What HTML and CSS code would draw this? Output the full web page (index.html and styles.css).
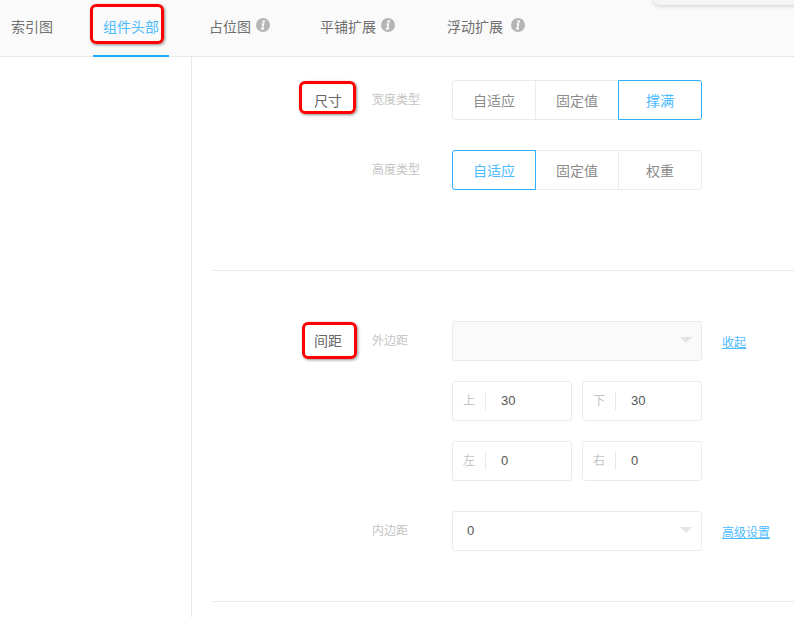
FILE: index.html
```html
<!DOCTYPE html>
<html lang="zh-CN">
<head>
<meta charset="utf-8">
<title>组件头部</title>
<link rel="stylesheet" href="styles.css">
</head>
<body>
<div class="popup"></div>
<nav class="tabs">
  <a class="tab tab-index">索引图</a>
  <a class="tab tab-header active">组件头部<span class="mark mark-tab"></span></a>
  <a class="tab tab-holder">占位图<svg class="info" viewBox="0 0 14 14"><circle cx="7" cy="7" r="7" fill="#b5b5b5"/><path d="M6.6 2.4h2.6l-.5 2H6.1zM5.8 5.3h2.6L7.3 10.1h.9l-.3 1.4H4.7l.3-1.4h.7l.7-3.4h-.9z" fill="#fff"/></svg></a>
  <a class="tab tab-tile">平铺扩展<svg class="info" viewBox="0 0 14 14"><circle cx="7" cy="7" r="7" fill="#b5b5b5"/><path d="M6.6 2.4h2.6l-.5 2H6.1zM5.8 5.3h2.6L7.3 10.1h.9l-.3 1.4H4.7l.3-1.4h.7l.7-3.4h-.9z" fill="#fff"/></svg></a>
  <a class="tab tab-float">浮动扩展<svg class="info info-wide" viewBox="0 0 14 14"><circle cx="7" cy="7" r="7" fill="#b5b5b5"/><path d="M6.6 2.4h2.6l-.5 2H6.1zM5.8 5.3h2.6L7.3 10.1h.9l-.3 1.4H4.7l.3-1.4h.7l.7-3.4h-.9z" fill="#fff"/></svg></a>
</nav>
<div class="layout">
  <aside class="sidebar"></aside>
  <main class="main">
    <section class="section section-size">
      <h2 class="title">尺寸<span class="mark mark-size"></span></h2>
      <div class="rows rows-size">
        <div class="row">
          <label class="label">宽度类型</label>
          <div class="segments">
            <button class="seg">自适应</button>
            <button class="seg">固定值</button>
            <button class="seg on">撑满</button>
          </div>
        </div>
        <div class="row">
          <label class="label">高度类型</label>
          <div class="segments">
            <button class="seg on">自适应</button>
            <button class="seg">固定值</button>
            <button class="seg">权重</button>
          </div>
        </div>
      </div>
    </section>
    <section class="section section-space">
      <h2 class="title">间距<span class="mark mark-space"></span></h2>
      <div class="rows rows-space">
        <div class="row">
          <label class="label">外边距</label>
          <div class="select disabled"><span class="caret"></span></div>
          <a class="link">收起</a>
        </div>
        <div class="row row-pair">
          <div class="field"><span class="prefix">上</span><span class="value">30</span></div>
          <div class="field"><span class="prefix">下</span><span class="value">30</span></div>
        </div>
        <div class="row row-pair">
          <div class="field"><span class="prefix">左</span><span class="value">0</span></div>
          <div class="field"><span class="prefix">右</span><span class="value">0</span></div>
        </div>
        <div class="row row-inner">
          <label class="label">内边距</label>
          <div class="select"><span class="value">0</span><span class="caret"></span></div>
          <a class="link">高级设置</a>
        </div>
      </div>
    </section>
  </main>
</div>
</body>
</html>
```
FILE: styles.css
```css
* { box-sizing: border-box; }
html, body { height: 100%; }
body {
  margin: 0;
  overflow: hidden;
  position: relative;
  background: #fff;
  color: #666;
  font-family: "Liberation Sans", "Noto Sans CJK SC", sans-serif;
  font-size: 14px;
}
.popup {
  position: absolute;
  left: 654px;
  top: -20px;
  width: 160px;
  height: 25px;
  background: #f5f5f5;
  border-radius: 5px;
  box-shadow: 0 1px 5px rgba(0, 0, 0, .18);
  z-index: 2;
}
.tabs {
  display: flex;
  height: 57px;
  background: #fafafa;
  border-bottom: 1px solid #e8e8e8;
}
.tab {
  position: relative;
  display: flex;
  align-items: center;
  height: 56px;
  padding-bottom: 4px;
  color: #707070;
  white-space: nowrap;
}
.tab-index { margin-left: 11px; }
.tab-header { margin-left: 40px; padding: 0 10px 4px; color: #4dbbff; border-bottom: 2px solid #1fa9ff; height: 57px; }
.tab-holder { margin-left: 40px; }
.tab-tile { margin-left: 50px; }
.tab-float { margin-left: 52px; }
.info { width: 14px; height: 14px; margin: -2px 0 0 5px; }
.info-wide { margin-left: 8px; }
.mark {
  position: absolute;
  border: 3px solid #ff0000;
  border-radius: 6px;
  box-shadow: 1px 1px 3px rgba(0, 0, 0, .45);
  pointer-events: none;
}
.mark-tab { left: -3px; top: 4px; width: 74px; height: 40px; }
.mark-size { left: 87px; top: 0; width: 57px; height: 33px; }
.mark-space { left: 90px; top: 0; width: 55px; height: 37px; }
.layout { display: flex; height: 560px; }
.sidebar { width: 192px; flex: none; border-right: 1px solid #e8e8e8; }
.main { flex: 1; min-width: 0; padding-left: 20px; }
.section { display: flex; border-bottom: 1px solid #e8e8e8; }
.section-size { height: 214px; padding-top: 23px; }
.section-space { height: 331px; padding-top: 50px; }
.title {
  position: relative;
  width: 130px;
  height: 32px;
  margin: 1px 30px 0 0;
  padding-top: 1px;
  text-align: right;
  font-size: 14px;
  font-weight: 400;
  color: #666;
}
.section-size .title { line-height: 38px; }
.section-space .title { line-height: 36px; }
.rows { display: flex; flex-direction: column; gap: 30px; }
.rows-space { gap: 20px; }
.row { display: flex; align-items: center; height: 40px; }
.row-pair { gap: 10px; padding-left: 80px; }
.row-inner { margin-top: 10px; }
.label { width: 80px; flex: none; font-size: 12px; color: #c4c4c4; margin-top: -3px; }
.segments { display: flex; width: 250px; height: 40px; }
.seg {
  flex: 1 1 0;
  margin: 0 0 0 -1px;
  padding: 0;
  height: 40px;
  background: #fff;
  border: 1px solid #ebebeb;
  color: #8c8c8c;
  font: inherit;
  line-height: 40px;
  position: relative;
}
.seg:first-child { margin-left: 0; border-radius: 3px 0 0 3px; }
.seg:last-child { border-radius: 0 3px 3px 0; }
.seg.on { border-color: #2aaeff; color: #4dbbff; z-index: 1; }
.select {
  position: relative;
  display: flex;
  align-items: center;
  width: 250px;
  height: 40px;
  padding-left: 14px;
  border: 1px solid #ebebeb;
  border-radius: 3px;
  background: #fff;
}
.select.disabled { background: #fafafa; }
.select .value { font-size: 13px; color: #555; margin-top: -1px; }
.caret {
  position: absolute;
  right: 9px;
  top: 15px;
  border-style: solid;
  border-width: 6px 6px 0;
  border-color: #e4e4e4 transparent transparent;
}
.link {
  margin-left: 20px;
  font-size: 12px;
  color: #4dbbff;
  text-decoration: underline;
}
.field {
  display: flex;
  align-items: center;
  width: 120px;
  height: 40px;
  padding-left: 10px;
  border: 1px solid #ebebeb;
  border-radius: 3px;
}
.prefix {
  width: 23px;
  height: 18px;
  flex: none;
  border-right: 1px solid #e8e8e8;
  font-size: 12px;
  line-height: 19px;
  color: #c4c4c4;
}
.field .value { margin-left: 15px; font-size: 13px; color: #555; margin-top: -1px; }
```
